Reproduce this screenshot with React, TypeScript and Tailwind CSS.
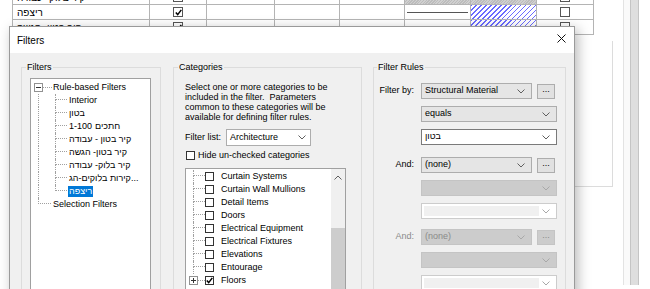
import React from "react";

const Chevron = ({ color = "#5f5f5f" }: { color?: string }) => (
  <svg width="8" height="5" viewBox="0 0 8 5" className="shrink-0">
    <polyline points="0.5,0.5 4,4 7.5,0.5" fill="none" stroke={color} strokeWidth="1" />
  </svg>
);

const ChevronUp = () => (
  <svg width="8" height="5" viewBox="0 0 8 5" className="shrink-0">
    <polyline points="0.5,4.5 4,1 7.5,4.5" fill="none" stroke="#5f5f5f" strokeWidth="1" />
  </svg>
);

const Check = () => (
  <svg width="7" height="7" viewBox="0 0 7 7">
    <path d="M0.8 3.4 L2.7 5.6 L6.3 0.9" fill="none" stroke="#000" strokeWidth="1.5" />
  </svg>
);

const SmallBox = ({ checked }: { checked?: boolean }) => (
  <span className="flex h-[9px] w-[9px] shrink-0 items-center justify-center border border-[#333] bg-white">
    {checked && <Check />}
  </span>
);

const TableBox = ({ checked }: { checked?: boolean }) => (
  <span className="flex h-[10px] w-[10px] shrink-0 items-center justify-center border border-[#555] bg-white">
    {checked && <Check />}
  </span>
);

// tree connector pieces
const Line = () => (
  <div className="h-full w-[16px] shrink-0 pl-[7px]">
    <div className="h-full border-l border-dotted border-[#a0a0a0]" />
  </div>
);

const Tee = ({ last }: { last?: boolean }) => (
  <div className="grid h-full w-[21px] shrink-0 grid-cols-[8px_12px_1px] grid-rows-[6px_7px]">
    <div />
    <div className="border-b border-l border-dotted border-[#a0a0a0]" />
    <div />
    <div />
    <div className={last ? "" : "border-l border-dotted border-[#a0a0a0]"} />
    <div />
  </div>
);

const treeChildren: React.ReactNode[] = [
  "Interior",
  "בטון",
  <span className="flex">
    <span>1-100</span>
    <span className="ml-[3px]">חתכים</span>
  </span>,
  "קיר בטון - עבודה",
  "קיר בטון- הגשה",
  "קיר בלוק- עבודה",
  "קירות בלוקים-הג...",
];

const categories = [
  "Curtain Systems",
  "Curtain Wall Mullions",
  "Detail Items",
  "Doors",
  "Electrical Equipment",
  "Electrical Fixtures",
  "Elevations",
  "Entourage",
];

const BgRow = ({ text, checked, pattern }: { text: string; checked: boolean; pattern: "gray" | "hatch" }) => (
  <div className="flex h-[15px] border-b border-[#b4b4b4]">
    <div className="flex w-[137px] items-center overflow-hidden border-r border-[#b4b4b4] pl-[4px] text-[10px] whitespace-nowrap">
      {text}
    </div>
    <div className="flex w-[57px] items-center justify-center border-r border-[#b4b4b4]">
      <TableBox checked={checked} />
    </div>
    <div className="w-[68px] border-r border-[#b4b4b4]" />
    <div className="w-[65px] border-r border-[#b4b4b4]" />
    <div className="w-[65px] border-r border-[#b4b4b4]" />
    {pattern === "gray" ? (
      <>
        <div className="w-[66px] border-r border-[#b4b4b4] bg-[repeating-linear-gradient(135deg,#bcbcbc_0px,#bcbcbc_1px,#d0d0d0_1px,#d0d0d0_2px)]" />
        <div className="w-[66px] border-r border-[#b4b4b4] bg-[repeating-linear-gradient(135deg,#bcbcbc_0px,#bcbcbc_1px,#d0d0d0_1px,#d0d0d0_2px)]" />
      </>
    ) : (
      <>
        <div className="flex w-[66px] items-center border-r border-[#b4b4b4] px-[2px]">
          <div className="h-[1px] w-full bg-[#555]" />
        </div>
        <div className="w-[66px] border-r border-[#b4b4b4] bg-[repeating-linear-gradient(135deg,#6b6bff_0px,#6b6bff_1px,#ffffff_1px,#ffffff_3.5px)]" />
      </>
    )}
    <div className="flex w-[57px] items-center justify-center border-r border-[#b4b4b4]">
      <TableBox />
    </div>
  </div>
);

export default function App() {
  return (
    <div className="relative h-[289px] w-[650px] overflow-hidden bg-white text-black [font-family:'Liberation_Sans','Noto_Sans',sans-serif]">
      {/* background: schedule table behind the dialog */}
      <div className="flex h-full">
        <div className="w-[12px] shrink-0" />
        <div className="flex w-[601px] shrink-0 flex-col">
          <div className="-mt-[10px] w-[582px] border-l border-[#b4b4b4]">
            <BgRow text="קיר בלוק- עבודה" checked={false} pattern="gray" />
            <BgRow text="ריצפה" checked pattern="hatch" />
            <BgRow text="קיר בטון- הגשה" checked pattern="hatch" />
          </div>
          <div className="mt-[6px] h-[146px] border border-t-0 border-[#dcdcdc]" />
        </div>
        <div className="w-[10px] shrink-0" />
        <div className="flex h-[285px] border-l border-[#e3e3e3]">
          <div className="w-[6px] bg-[#fafafa]" />
          <div className="w-[9px] border-x border-[#c4c4c4] bg-[#dedede]" />
        </div>
      </div>

      {/* Filters dialog */}
      <div className="absolute left-[9px] top-[26px] flex h-[280px] w-[566px] flex-col border border-[#9a9a9a] bg-[#f0f0f0] text-[9px] shadow-[3px_3px_12px_rgba(0,0,0,0.28)]">
        <div className="flex h-[26px] shrink-0 items-center justify-between bg-white pl-[7px] pr-[8px]">
          <span className="text-[10px]">Filters</span>
          <svg width="9" height="9" viewBox="0 0 9 9" className="mb-[4px]">
            <path d="M0.5 0.5 L8.5 8.5 M8.5 0.5 L0.5 8.5" stroke="#111" strokeWidth="1" />
          </svg>
        </div>

        <div className="flex pl-[11px] pt-[9px]">
          {/* Filters group */}
          <fieldset className="h-[240px] w-[140px] shrink-0 border border-[#dcdcdc] p-0">
            <legend className="ml-[4px] px-[1px] leading-[11px]">Filters</legend>
            <div className="pl-[8px] pt-[5px]">
              <div className="h-[230px] w-[121px] border border-[#a0a0a0] bg-white pt-[2px]">
                <div className="flex h-[13px] items-center">
                  <div className="flex w-[22px] shrink-0 items-center pl-[3px]">
                    <span className="flex h-[9px] w-[9px] items-center justify-center border border-[#919191] bg-white">
                      <span className="h-[1px] w-[5px] bg-[#333]" />
                    </span>
                    <span className="w-[9px] border-t border-dotted border-[#a0a0a0]" />
                  </div>
                  <span className="whitespace-nowrap">Rule-based Filters</span>
                </div>
                {treeChildren.map((t, i) => (
                  <div key={i} className="flex h-[13px] items-center">
                    <Line />
                    <Tee />
                    <span className="px-[1px] whitespace-nowrap">{t}</span>
                  </div>
                ))}
                <div className="flex h-[13px] items-center">
                  <Line />
                  <Tee last />
                  <span className="flex h-[11px] items-center bg-[#0078d7] px-[1px] text-white">ריצפה</span>
                </div>
                <div className="flex h-[13px] items-center">
                  <div className="grid h-full w-[22px] shrink-0 grid-cols-[7px_13px_2px] grid-rows-[6px_7px]">
                    <div />
                    <div className="border-b border-l border-dotted border-[#a0a0a0]" />
                    <div />
                  </div>
                  <span className="whitespace-nowrap">Selection Filters</span>
                </div>
              </div>
            </div>
          </fieldset>

          {/* Categories group */}
          <fieldset className="ml-[12px] h-[240px] w-[189px] shrink-0 border border-[#dcdcdc] p-0">
            <legend className="ml-[4px] px-[1px] leading-[11px]">Categories</legend>
            <div className="pl-[11px] pt-[9px]">
              <div className="leading-[10px] whitespace-pre">
                <div>Select one or more categories to be</div>
                <div>included in the filter.  Parameters</div>
                <div>common to these categories will be</div>
                <div>available for defining filter rules.</div>
              </div>
              <div className="mt-[7px] flex h-[17px] items-center">
                <span className="w-[41px] shrink-0">Filter list:</span>
                <div className="flex h-[17px] w-[85px] items-center justify-between border border-[#adadad] bg-white pl-[3px] pr-[4px]">
                  <span>Architecture</span>
                  <Chevron />
                </div>
              </div>
              <div className="mt-[4px] flex h-[11px] items-center">
                <span className="ml-[1px]">
                  <SmallBox />
                </span>
                <span className="ml-[3px]">Hide un-checked categories</span>
              </div>
              <div className="mt-[7px] flex h-[130px] w-[161px] border border-[#a0a0a0] bg-white">
                <div className="flex-1 pt-[1px]">
                  {categories.map((c) => (
                    <div key={c} className="flex h-[13px] items-center">
                      <div className="grid h-full w-[19px] shrink-0 grid-cols-[7px_12px] grid-rows-[6px_7px]">
                        <div />
                        <div className="border-b border-l border-dotted border-[#a0a0a0]" />
                        <div />
                        <div className="border-l border-dotted border-[#a0a0a0]" />
                      </div>
                      <SmallBox />
                      <span className="ml-[7px] whitespace-nowrap">{c}</span>
                    </div>
                  ))}
                  <div className="flex h-[13px] items-center">
                    <div className="flex w-[19px] shrink-0 items-center pl-[3px]">
                      <span className="relative flex h-[9px] w-[9px] items-center justify-center border border-[#919191] bg-white">
                        <span className="h-[1px] w-[5px] bg-[#333]" />
                        <span className="absolute h-[5px] w-[1px] bg-[#333]" />
                      </span>
                      <span className="w-[7px] border-t border-dotted border-[#a0a0a0]" />
                    </div>
                    <SmallBox checked />
                    <span className="ml-[7px]">Floors</span>
                  </div>
                </div>
                <div className="flex w-[14px] shrink-0 flex-col bg-[#f0f0f0]">
                  <div className="flex h-[16px] items-center justify-center">
                    <ChevronUp />
                  </div>
                  <div className="h-[43px]" />
                  <div className="flex-1 bg-[#cdcdcd]" />
                </div>
              </div>
            </div>
          </fieldset>

          {/* Filter Rules group */}
          <fieldset className="ml-[11px] h-[240px] w-[193px] shrink-0 border border-[#dcdcdc] p-0">
            <legend className="ml-[3px] px-[1px] leading-[11px]">Filter Rules</legend>
            <div className="pl-[3px] pt-[10px]">
              <div className="flex h-[16px] items-center">
                <span className="w-[44px] shrink-0 pr-[7px] text-right">Filter by:</span>
                <div className="flex h-[16px] w-[111px] items-center justify-between border border-[#adadad] bg-[#e5e5e5] pl-[3px] pr-[6px]">
                  <span>Structural Material</span>
                  <Chevron />
                </div>
                <div className="ml-[5px] flex h-[15px] w-[18px] items-center justify-center border border-[#adadad] bg-[#e1e1e1] pb-[3px]">
                  ...
                </div>
              </div>
              <div className="mt-[7px] flex h-[16px] items-center pl-[44px]">
                <div className="flex h-[16px] w-[136px] items-center justify-between border border-[#adadad] bg-[#e5e5e5] pl-[3px] pr-[6px]">
                  <span>equals</span>
                  <Chevron />
                </div>
              </div>
              <div className="mt-[7px] flex h-[16px] items-center pl-[44px]">
                <div className="flex h-[16px] w-[136px] items-center justify-between border border-[#7a7a7a] bg-white pl-[3px] pr-[6px]">
                  <span>בטון</span>
                  <Chevron />
                </div>
              </div>

              <div className="mt-[12px] flex h-[16px] items-center">
                <span className="w-[44px] shrink-0 pr-[7px] text-right">And:</span>
                <div className="flex h-[16px] w-[111px] items-center justify-between border border-[#adadad] bg-[#e5e5e5] pl-[3px] pr-[6px]">
                  <span>(none)</span>
                  <Chevron />
                </div>
                <div className="ml-[5px] flex h-[15px] w-[18px] items-center justify-center border border-[#adadad] bg-[#e1e1e1] pb-[3px]">
                  ...
                </div>
              </div>
              <div className="mt-[7px] flex h-[16px] items-center pl-[44px]">
                <div className="flex h-[16px] w-[136px] items-center justify-end border border-[#c4c4c4] bg-[#cccccc] pr-[6px]">
                  <Chevron color="#a8a8a8" />
                </div>
              </div>
              <div className="mt-[7px] flex h-[16px] items-center pl-[44px]">
                <div className="flex h-[16px] w-[136px] items-center justify-between border border-[#cccccc] bg-white py-[2px] pl-[2px] pr-[6px]">
                  <div className="h-full w-[115px] bg-[#f0f0f0]" />
                  <Chevron color="#a8a8a8" />
                </div>
              </div>

              <div className="mt-[10px] flex h-[16px] items-center text-[#8a8a8a]">
                <span className="w-[44px] shrink-0 pr-[7px] text-right">And:</span>
                <div className="flex h-[16px] w-[111px] items-center justify-between border border-[#c4c4c4] bg-[#cccccc] pl-[3px] pr-[6px]">
                  <span>(none)</span>
                  <Chevron color="#a8a8a8" />
                </div>
                <div className="ml-[5px] flex h-[15px] w-[18px] items-center justify-center border border-[#c4c4c4] bg-[#cccccc] pb-[3px]">
                  ...
                </div>
              </div>
              <div className="mt-[7px] flex h-[16px] items-center pl-[44px]">
                <div className="flex h-[16px] w-[136px] items-center justify-end border border-[#c4c4c4] bg-[#cccccc] pr-[6px]">
                  <Chevron color="#a8a8a8" />
                </div>
              </div>
              <div className="mt-[7px] flex h-[16px] items-center pl-[44px]">
                <div className="flex h-[16px] w-[136px] items-center justify-between border border-[#cccccc] bg-white py-[2px] pl-[2px] pr-[6px]">
                  <div className="h-full w-[115px] bg-[#f0f0f0]" />
                  <Chevron color="#a8a8a8" />
                </div>
              </div>
            </div>
          </fieldset>
        </div>
      </div>
    </div>
  );
}
